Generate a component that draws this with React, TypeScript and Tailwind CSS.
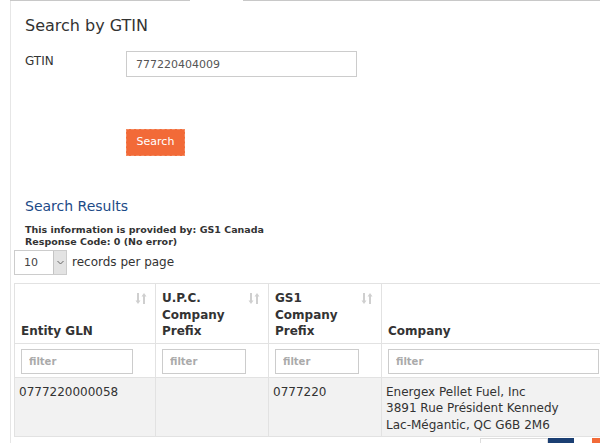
import React from "react";

function SortIcon() {
  return (
    <svg width="12" height="13" viewBox="0 0 12 13" className="shrink-0">
      <path d="M3 1v9" stroke="#cfcfcf" strokeWidth="2" />
      <path d="M0.5 8.5 3 12l2.5-3.5z" fill="#cfcfcf" />
      <path d="M9 3v9" stroke="#cfcfcf" strokeWidth="2" />
      <path d="M6.5 4.5 9 1l2.5 3.5z" fill="#cfcfcf" />
    </svg>
  );
}

const columns = [
  { title: ["Entity GLN"], width: "w-[141px]", sort: true, filter: "w-[112px]" },
  { title: ["U.P.C.", "Company", "Prefix"], width: "w-[113px]", sort: true, filter: "w-[84px]" },
  { title: ["GS1", "Company", "Prefix"], width: "w-[113px]", sort: true, filter: "w-[84px]" },
  { title: ["Company"], width: "w-[260px]", sort: false, filter: "w-[211px]" },
];

export default function App() {
  return (
    <div className="w-[600px] h-[443px] overflow-hidden bg-white text-[#333] font-['DejaVu_Sans',Verdana,sans-serif]">
      {/* tab edge */}
      <div className="flex h-px">
        <div className="w-[10px]" />
        <div className="w-[180px] bg-[#c8c8c8]" />
        <div className="w-[53px]" />
        <div className="flex-1 bg-[#c8c8c8]" />
      </div>
      <div className="ml-[10px] border-l border-[#e6e6e6] h-[442px] pl-[3px]">
        <div className="pl-[11px]">
          <h2 className="pt-[15px] text-[16px] leading-[20px]">Search by GTIN</h2>
          <div className="flex mt-[15px]">
            <label className="w-[101px] pt-[3px] text-[12px] leading-[15px]">GTIN</label>
            <input
              readOnly
              value="777220404009"
              className="w-[231px] h-[26px] border border-[#ccc] px-[9px] text-[11px] text-[#555] outline-none"
            />
          </div>
          <div className="pl-[101px] mt-[51px]">
            <button className="w-[59px] h-[27px] bg-[#f26a38] border border-dashed border-[#f48a60] text-white text-[11px]">
              Search
            </button>
          </div>
          <h3 className="mt-[42px] text-[14px] leading-[17px] text-[#1c4a87]">Search Results</h3>
          <div className="mt-[9px] text-[9.5px] leading-[12px] font-bold text-[#333]">
            <div>This information is provided by: GS1 Canada</div>
            <div>Response Code: 0 (No error)</div>
          </div>
        </div>
        <div className="flex items-center mt-[2px]">
          <div className="flex w-[53px] h-[25px] border border-[#ccc]">
            <div className="flex-1 text-[11px] leading-[23px] pl-[9px] text-[#444]">10</div>
            <div className="w-[13px] bg-[#e3e3e3] border-l border-[#c4c4c4] flex items-center justify-center">
              <svg width="7" height="5" viewBox="0 0 7 5">
                <path d="M0.5 1 3.5 4 6.5 1" stroke="#666" fill="none" strokeWidth="1" />
              </svg>
            </div>
          </div>
          <span className="ml-[5px] text-[12px]">records per page</span>
        </div>
        <div className="mt-[8px] flex flex-col">
          <div className="flex border-t border-l border-[#e2e2e2]">
            {columns.map((c, i) => (
              <div key={i} className={`${c.width} shrink-0 border-r border-b border-[#e2e2e2]`}>
                <div className="h-[59px] relative flex items-end px-[6px] pb-[3px]">
                  <div className="text-[12px] leading-[16.5px] font-bold">
                    {c.title.map((t) => (
                      <div key={t}>{t}</div>
                    ))}
                  </div>
                  {c.sort && (
                    <div className="absolute right-[8px] top-[8px]">
                      <SortIcon />
                    </div>
                  )}
                </div>
              </div>
            ))}
          </div>
          <div className="flex border-l border-[#e2e2e2]">
            {columns.map((c, i) => (
              <div key={i} className={`${c.width} shrink-0 h-[34px] border-r border-b border-[#e2e2e2] pl-[6px] pt-[4px]`}>
                <input
                  readOnly
                  placeholder="filter"
                  className={`${c.filter} h-[25px] border border-[#ccc] px-[7px] text-[10px] font-bold placeholder:text-[#aaa] outline-none`}
                />
              </div>
            ))}
          </div>
          <div className="flex border-l border-[#e2e2e2] bg-[#f2f2f2]">
            <div className="w-[141px] shrink-0 h-[59px] border-r border-b border-[#e2e2e2] px-[4px] pt-[6px] text-[12px] leading-[16.5px]">
              0777220000058
            </div>
            <div className="w-[113px] shrink-0 border-r border-b border-[#e2e2e2]" />
            <div className="w-[113px] shrink-0 border-r border-b border-[#e2e2e2] px-[4px] pt-[6px] text-[12px] leading-[16.5px]">
              0777220
            </div>
            <div className="w-[260px] shrink-0 border-r border-b border-[#e2e2e2] px-[4px] pt-[6px] text-[12px] leading-[16.5px]">
              <div>Energex Pellet Fuel, Inc</div>
              <div>3891 Rue Président Kennedy</div>
              <div>Lac-Mégantic, QC G6B 2M6</div>
            </div>
          </div>
          <div className="flex justify-end pr-0 mt-px">
            <div className="w-[68px] h-[10px] border border-[#ddd] bg-white" />
            <div className="w-[26px] h-[10px] bg-[#1b3f73]" />
            <div className="w-[18px] h-[10px]" />
            <div className="w-[8px] h-[10px] bg-[#f26a38]" />
          </div>
        </div>
      </div>
    </div>
  );
}
